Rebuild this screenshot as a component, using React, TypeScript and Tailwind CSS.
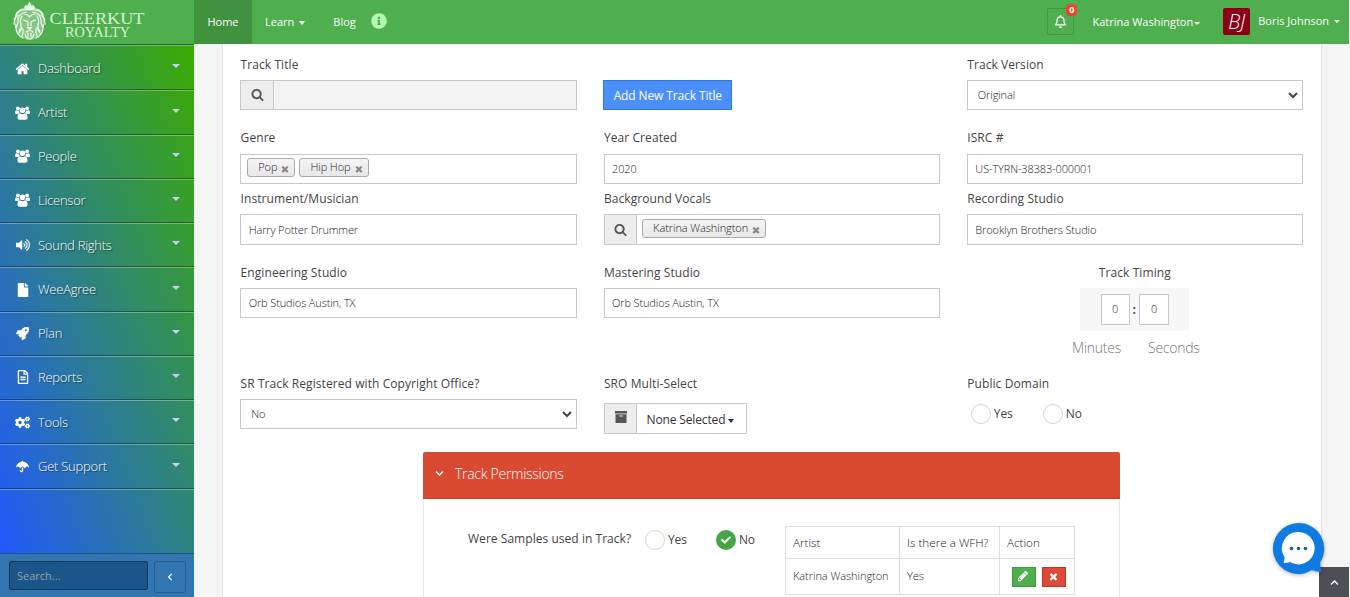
import type { ReactNode } from "react";
import { FaRegBell, FaFile, FaRocket, FaCogs, FaUmbrella, FaRegFileAlt, FaVolumeUp, FaInfoCircle, FaCheck, FaChevronDown, FaChevronUp, FaChevronLeft } from "react-icons/fa";

function Glyph({ d, className }: { d: string; className?: string }) {
  return (
    <svg viewBox="0 0 1792 1792" fill="currentColor" className={className}>
      <path d={d} />
    </svg>
  );
}

const HOME =
  "M1472 992v480q0 26-19 45t-45 19h-384v-384h-256v384h-384q-26 0-45-19t-19-45v-480q0-1 .5-3t.5-3l575-474 575 474q1 2 1 6zm223-69l-62 74q-8 9-21 11h-3q-13 0-21-7l-692-577-692 577q-12 8-24 7-13-2-21-11l-62-74q-8-10-7-23.5t11-21.5l719-599q32-26 76-26t76 26l244 204v-195q0-14 9-23t23-9h192q14 0 23 9t9 23v408l219 182q10 8 11 21.5t-7 23.5z";
const SEARCH =
  "M1216 832q0-185-131.5-316.5t-316.5-131.5-316.5 131.5-131.5 316.5 131.5 316.5 316.5 131.5 316.5-131.5 131.5-316.5zm512 832q0 52-38 90t-90 38q-54 0-90-38l-343-342q-179 124-399 124-143 0-273.5-55.5t-225-150-150-225-55.5-273.5 55.5-273.5 150-225 225-150 273.5-55.5 273.5 55.5 225 150 150 225 55.5 273.5q0 220-124 399l343 343q37 37 37 90z";
const TIMES =
  "M1490 1322q0 40-28 68l-136 136q-28 28-68 28t-68-28l-294-294-294 294q-28 28-68 28t-68-28l-136-136q-28-28-28-68t28-68l294-294-294-294q-28-28-28-68t28-68l136-136q28-28 68-28t68 28l294 294 294-294q28-28 68-28t68 28l136 136q28 28 28 68t-28 68l-294 294 294 294q28 28 28 68z";
const PENCIL =
  "M491 1536l91-91-235-235-91 91v107h128v128h107zm523-928q0-22-22-22-10 0-17 7l-542 542q-7 7-7 17 0 22 22 22 10 0 17-7l542-542q7-7 7-17zm-54-192l416 416-832 832h-416v-416zm683 96q0 53-37 90l-166 166-416-416 166-165q36-38 90-38 53 0 91 38l235 234q37 39 37 91z";

function Users({ className }: { className?: string }) {
  return (
    <svg viewBox="0 0 15 14" fill="currentColor" className={className}>
      <circle cx="2.9" cy="2.3" r="1.9" />
      <circle cx="12.1" cy="2.3" r="1.9" />
      <circle cx="7.5" cy="4.2" r="2.8" />
      <path d="M1.600 4.300C.4 4.300 0 5.500 0 7c0 .8.600 1 1.300 1h1.900c.4-.6 1-.9 1.700-1-.7-.8-.9-1.500-.8-2.500-.9.300-1.700.2-2.500-.2z" />
      <path d="M13.400 4.300c1.200 0 1.600 1.200 1.600 2.700 0 .8-.6 1-1.300 1h-1.900c-.4-.6-1-.9-1.700-1 .7-.8.9-1.500.8-2.500.9.300 1.700.2 2.500-.2z" />
      <path d="M5 7.300c1.500 1.200 3.500 1.200 5 0 2 .1 2.500 2 2.500 4.200 0 1.500-.8 2.200-2.100 2.200H4.600c-1.300 0-2.100-.7-2.100-2.200 0-2.200.5-4.100 2.500-4.200z" />
    </svg>
  );
}

function Caret({ className = "" }: { className?: string }) {
  return <span className={`inline-block h-0 w-0 border-x-4 border-t-4 border-x-transparent ${className}`} />;
}

const NAV: { label: string; height: string; nudge: string; icon: ReactNode }[] = [
  { label: "Dashboard", height: "h-[45px]", nudge: "pt-0.5", icon: <Glyph d={HOME} className="size-4" /> },
  { label: "Artist", height: "h-[45px]", nudge: "", icon: <Users className="h-3.5 w-[15px]" /> },
  { label: "People", height: "h-11", nudge: "pb-[1.5px]", icon: <Users className="h-3.5 w-[15px]" /> },
  { label: "Licensor", height: "h-11", nudge: "pb-[1.5px]", icon: <Users className="h-3.5 w-[15px]" /> },
  { label: "Sound Rights", height: "h-11", nudge: "", icon: <FaVolumeUp className="size-3.5" /> },
  { label: "WeeAgree", height: "h-[45px]", nudge: "", icon: <FaFile className="h-3.5 w-3" /> },
  { label: "Plan", height: "h-11", nudge: "pb-[1.5px]", icon: <FaRocket className="size-[13px]" /> },
  { label: "Reports", height: "h-11", nudge: "pb-[1.5px]", icon: <FaRegFileAlt className="h-3.5 w-3" /> },
  { label: "Tools", height: "h-11", nudge: "", icon: <FaCogs className="size-[15px]" /> },
  { label: "Get Support", height: "h-[45px]", nudge: "", icon: <FaUmbrella className="size-[13px]" /> },
];

function Logo() {
  return (
    <svg viewBox="0 0 150 44" className="h-11 w-[150px]" fill="#d9f3d6">
      <path d="M29.500 9c-7 0-13 3-14.500 9-1 4 0 7 1 11 2 6 8 11 13.500 11S41 35 43 29c1-4 2-7 1-11-1.500-6-7.500-9-14.500-9z" fill="#ffffff" fillOpacity="0.3" />
      <g stroke="#f1fbf0" fill="none" strokeWidth="1.200" strokeLinecap="round">
        <path d="M24 8l2-3 1 2 2.500-5L32 7l1-2 2 3-2 2h-7z" fill="#e9f9e7" strokeWidth="0.600" />
        <path d="M25 10c-6 0-10 4-10 9 0 2-1 3-1 5 1 0 2 2 2 4 0 5 3 8 7 10M34 10c6 0 10 4 10 9 0 2 1 3 1 5-1 0-2 2-2 4 0 5-3 8-7 10" />
        <path d="M26 12c-5 1-8 4-8 9 0 4-1 5-2 6M33 12c5 1 8 4 8 9 0 4 1 5 2 6M22 16c-2 3-2 6-1 9s-1 5-2 6M37 16c2 3 2 6 1 9s1 5 2 6" />
        <path d="M16 14c2-3 5-5 8-5M43 14c-2-3-5-5-8-5M14 20c1-2 2-4 4-5M45 20c-1-2-2-4-4-5M19 33c1-2 3-3 3-6M40 33c-1-2-3-3-3-6M22 36c1-2 2-4 1-7M37 36c-1-2-2-4-1-7" />
        <path d="M24 14c2 0 4 1 5.500 3 1.500-2 3.500-3 5.500-3M23.500 20l4 1.500M35.500 20l-4 1.500M28 22v4M31 22v4" />
        <path d="M27.500 27.500h4l-2 2zM26 32c2-2 5-2 7 0M25 34c1 4 3 5 4.500 5s3.500-1 4.500-5M28 33v4M31 33v4" />
      </g>
      <g fontFamily="'Liberation Serif', serif">
        <text x="49.500" y="23.500" fontSize="16.500" textLength="95" lengthAdjust="spacingAndGlyphs">
          CLEERKUT
        </text>
        <text x="65" y="36.500" fontSize="14" textLength="65" lengthAdjust="spacingAndGlyphs">
          ROYALTY
        </text>
      </g>
    </svg>
  );
}

function Header() {
  return (
    <header className="flex h-11 w-[1349px] shrink-0 bg-[#4fae4e] text-[11px] font-medium text-white">
      <div className="w-[194px]">
        <Logo />
      </div>
      <nav className="flex items-center">
        <a className="flex h-11 w-[58px] items-center justify-center bg-[#41923f]">Home</a>
        <a className="ml-[13px] flex items-center gap-[5px]">
          Learn <Caret className="mt-0.5 border-x-[3.5px] border-t-white" />
        </a>
        <a className="ml-7">Blog</a>
        <FaInfoCircle className="mb-[3px] ml-[15px] size-4 text-[#b5ffb1]" />
      </nav>
      <div className="ml-auto flex items-center pr-[9px]">
        <div className="relative -mt-px flex size-[27px] items-center justify-center rounded-xs border border-[#419641]">
          <FaRegBell className="size-[13px]" />
          <span className="absolute -top-[5px] -right-[4px] flex h-3 w-[11px] items-center justify-center rounded-sm bg-[#ed4332] text-[9px] font-bold">0</span>
        </div>
        <div className="ml-[18px] flex items-center gap-px">
          Katrina Washington <Caret className="mt-0.5 border-x-[3px] border-t-[3px] border-t-white" />
        </div>
        <div className="-mt-px ml-[23px] flex size-[27px] items-center justify-center rounded-xs bg-[#8b0014] text-[20px] font-light italic">BJ</div>
        <div className="-mt-0.5 ml-2 flex items-center gap-[5px]">
          Boris Johnson <Caret className="mt-px border-x-[3px] border-t-[3px] border-t-white" />
        </div>
      </div>
    </header>
  );
}

function Sidebar() {
  return (
    <aside className="flex w-[194px] shrink-0 flex-col">
      <div className="flex flex-1 flex-col border-t border-[#245f3a] bg-[linear-gradient(to_top_right,#2159ff,#3cac00)]">
        {NAV.map((n) => (
          <div
            key={n.label}
            className={`flex shrink-0 items-center border-t border-b border-t-white/30 border-b-black/35 pr-3.5 pl-[15px] text-[13px] tracking-[-0.25px] text-white [text-shadow:1px_1px_1px_rgba(0,0,0,0.5)] ${n.height}`}
          >
            <span className={`flex items-center ${n.nudge}`}>
              <span className="flex w-[15px] items-center justify-center">{n.icon}</span>
              <span className="mt-px ml-2 font-[350]">{n.label}</span>
            </span>
            <Caret className="mb-1 ml-auto border-t-[#c9d0f4]" />
          </div>
        ))}
        <div className="border-t border-white/30" />
      </div>
      <div className="flex h-11 shrink-0 border-t border-[#1f5583] bg-[#3276b1] pt-[7px] pl-[9px]">
        <div className="flex h-[29px] w-[139px] items-center rounded-xs border border-[#0e3554] bg-[#1a5689] pt-px pl-[7px] text-[11px] text-[#98a0a8]">Search...</div>
        <div className="ml-[6px] flex h-8 w-8 items-center justify-center rounded-xs border border-[#285e8e] text-white">
          <FaChevronLeft className="size-2" />
        </div>
      </div>
    </aside>
  );
}

function Field({ label, children, gap = "mt-[5px]" }: { label: string; children: ReactNode; gap?: string }) {
  return (
    <div className="flex w-1/3 flex-col pr-[13.6px] pl-[13.2px]">
      <label className="pl-[0.4px] text-[12px] leading-5 font-medium tracking-[0.08px] text-[#444]">{label}</label>
      <div className={gap}>{children}</div>
    </div>
  );
}

const BOX = "flex items-center border border-[#c8c8c8] bg-white text-[11px] font-light tracking-[-0.13px] text-[#222]";

function Input({ value, className = "h-[30px]" }: { value: string; className?: string }) {
  return <div className={`${BOX} pl-[7.5px] ${className}`}>{value}</div>;
}

function Select({ value }: { value: string }) {
  return (
    <div className={`${BOX} h-[30px] justify-between pr-1 pl-2.5`}>
      {value}
      <svg viewBox="0 0 10 7" className="h-[7px] w-2.5">
        <path d="M1 1l4 4 4-4" fill="none" stroke="#444" strokeWidth="2" />
      </svg>
    </div>
  );
}

function Addon({ children }: { children: ReactNode }) {
  return <div className="flex w-[32.6px] shrink-0 items-center justify-center self-stretch border-r border-[#c8c8c8] bg-[#ededed] text-[#555]">{children}</div>;
}

function Chip({ text }: { text: string }) {
  return (
    <span className="flex h-[19px] items-center gap-[3px] rounded-[3px] border border-[#aaa] bg-linear-to-b from-[#f4f4f4] to-[#e8e8e8] pr-1 pl-2.5 text-[11px] tracking-[-0.08px] text-[#222]">
      {text}
      <Glyph d={TIMES} className="mt-0.5 size-[10px] text-[#888]" />
    </span>
  );
}

function Radio({ label, checked = false }: { label: string; checked?: boolean }) {
  return (
    <span className="flex items-center gap-[3px] text-[12px] tracking-[-0.1px] text-[#444]">
      {checked ? (
        <span className="flex size-5 items-center justify-center rounded-full bg-[#46a546] text-white">
          <FaCheck className="size-2.5" />
        </span>
      ) : (
        <span className="size-5 rounded-full border border-[#d5d5cf] bg-white" />
      )}
      <span>{label}</span>
    </span>
  );
}

function Permissions() {
  return (
    <section className="ml-[196px] w-[697px]">
      <div className="flex h-[47px] items-center rounded-t-xs border-b border-[#c74025] bg-[#da4a32] pb-[3px] pl-3 text-[14px] font-[350] tracking-[-0.28px] text-white">
        <FaChevronDown className="mr-[11px] size-[9px]" />
        Track Permissions
      </div>
      <div className="flex h-[98px] border-x border-[#e8e8e8] pt-[27px] pl-[44px]">
        <span className="w-[177px] pt-[3px] text-[12px] leading-5 font-medium tracking-[0.04px] text-[#444]">Were Samples used in Track?</span>
        <div className="flex h-[27px] w-[140px] items-center gap-[29px]">
          <Radio label="Yes" />
          <Radio label="No" checked />
        </div>
        <table className="h-[69px] w-[289px] table-fixed border-collapse text-[11px] font-light text-[#222]">
          <colgroup>
            <col className="w-[114px]" />
            <col className="w-[100px]" />
            <col className="w-[75px]" />
          </colgroup>
          <tbody>
            <tr className="h-8 text-[11.7px]">
              <td className="border border-[#ddd] pl-[7px]">Artist</td>
              <td className="border border-[#ddd] pl-[7px]">Is there a WFH?</td>
              <td className="border border-[#ddd] pl-[7px]">Action</td>
            </tr>
            <tr className="h-9">
              <td className="border border-[#ddd] pb-px pl-[7px] tracking-[-0.05px]">Katrina Washington</td>
              <td className="border border-[#ddd] pb-px pl-[7px]">Yes</td>
              <td className="border border-[#ddd]">
                <div className="flex gap-1.5 pl-3 text-white">
                  <span className="flex h-5 w-6 items-center justify-center border border-[#3f9a3f] bg-[#4fae4e]">
                    <Glyph d={PENCIL} className="mr-0.5 mb-px size-3" />
                  </span>
                  <span className="flex h-5 w-6 items-center justify-center border border-[#b8382a] bg-[#e04b37]">
                    <Glyph d={TIMES} className="mr-0.5 size-[11px]" />
                  </span>
                </div>
              </td>
            </tr>
          </tbody>
        </table>
      </div>
    </section>
  );
}

function Content() {
  return (
    <main className="w-[1100px] overflow-hidden border-x border-[#e8e8e8] bg-white px-1 pt-[11px]">
      <div className="flex h-[73px]">
        <Field label="Track Title">
          <div className="flex h-[30px] border border-[#c8c8c8] bg-[#f3f3f3]">
            <Addon>
              <Glyph d={SEARCH} className="mb-px ml-px size-[13px]" />
            </Addon>
          </div>
        </Field>
        <div className="w-1/3 px-[13px] pt-[25px]">
          <button className="h-[30px] w-[129px] border border-[#3276d8] bg-[#4b8ffb] pt-0.5 text-[12px] tracking-[-0.12px] text-white">Add New Track Title</button>
        </div>
        <Field label="Track Version">
          <Select value="Original" />
        </Field>
      </div>
      <div className="flex h-[61px]">
        <Field label="Genre" gap="mt-1.5">
          <div className={`${BOX} h-[30px] items-start gap-1 pt-[3px] pl-1.5`}>
            <Chip text="Pop" />
            <Chip text="Hip Hop" />
          </div>
        </Field>
        <Field label="Year Created" gap="mt-1.5">
          <Input value="2020" />
        </Field>
        <Field label="ISRC #" gap="mt-1.5">
          <Input value="US-TYRN-38383-000001" />
        </Field>
      </div>
      <div className="flex h-[74px]">
        <Field label="Instrument/Musician">
          <Input value="Harry Potter Drummer" className="h-[31px] pt-px" />
        </Field>
        <Field label="Background Vocals">
          <div className={`${BOX} h-[31px] items-start`}>
            <Addon>
              <Glyph d={SEARCH} className="mb-px size-[13px]" />
            </Addon>
            <div className="pt-1 pl-[5px]">
              <Chip text="Katrina Washington" />
            </div>
          </div>
        </Field>
        <Field label="Recording Studio">
          <Input value="Brooklyn Brothers Studio" className="h-[31px] pt-px" />
        </Field>
      </div>
      <div className="flex h-[111px]">
        <Field label="Engineering Studio">
          <Input value="Orb Studios Austin, TX" className="h-[30px] pt-px" />
        </Field>
        <Field label="Mastering Studio">
          <Input value="Orb Studios Austin, TX" className="h-[30px] pt-px" />
        </Field>
        <div className="flex w-1/3 flex-col items-center pr-3.5 pl-[13px]">
          <div className="text-[12px] leading-5 font-medium tracking-[0.08px] text-[#444]">Track Timing</div>
          <div className="mt-[5px] flex h-[43px] w-[109px] items-center justify-center gap-[3px] bg-[#f7f7f7] text-[12px] font-bold text-[#444]">
            <div className={`${BOX} h-[31px] w-[29px] justify-center`}>0</div>
            :
            <div className={`${BOX} h-[31px] w-[30px] justify-center`}>0</div>
          </div>
          <div className="mt-[7px] ml-0.5 flex gap-[27px] text-[14px] leading-5 font-light tracking-[-0.25px] text-[#777]">
            <span>Minutes</span>
            <span>Seconds</span>
          </div>
        </div>
      </div>
      <div className="flex h-[78px]">
        <Field label="SR Track Registered with Copyright Office?">
          <Select value="No" />
        </Field>
        <Field label="SRO Multi-Select" gap="mt-[9px]">
          <div className="flex h-[31px] w-[143px] items-center border border-[#c8c8c8] text-[12px] tracking-[-0.15px] text-[#333]">
            <Addon>
              <svg viewBox="0 0 12 12" fill="currentColor" className="mb-[3px] ml-px size-3">
                <path d="M0 0h12v2.500H0zM.5 3.200h11V12H.5zM4.300 4.400v1.200h3.400V4.400z" fillRule="evenodd" />
              </svg>
            </Addon>
            <span className="mt-0.5 pl-[9.5px]">None Selected</span>
            <Caret className="mt-1 ml-[3px] border-x-[3.5px] border-t-[#333]" />
          </div>
        </Field>
        <Field label="Public Domain" gap="mt-[10px]">
          <div className="flex gap-[30px] pl-1">
            <Radio label="Yes" />
            <Radio label="No" />
          </div>
        </Field>
      </div>
      <Permissions />
    </main>
  );
}

export default function App() {
  return (
    <div className="relative flex h-[597px] w-[1350px] flex-col overflow-hidden bg-[#f5f5f5] font-['Open_Sans',sans-serif]">
      <Header />
      <div className="flex min-h-0 flex-1">
        <Sidebar />
        <div className="flex pl-7">
          <Content />
        </div>
      </div>
      <div className="absolute right-px bottom-0 flex h-[30px] w-[30px] items-center justify-center bg-[#4e4f54] text-white">
        <FaChevronUp className="size-[9px]" />
      </div>
      <svg viewBox="0 0 60 60" className="absolute top-[519px] left-[1269px] size-[60px] drop-shadow-[0_1px_2px_rgba(0,0,0,0.3)]">
        <path d="M29.500 4a25.500 25.500 0 1 0 13.500 47.100q4 2 9.500 1.400-1.500-4-1.100-9.500A25.500 25.500 0 0 0 29.500 4z" fill="#0f7ae0" />
        <path d="M29.500 13a16.200 16.200 0 1 1-8.500 30q-3 1.200-6.500 1 1.300-3 1-6A16.200 16.200 0 0 1 29.500 13z" fill="#fff" />
        <g fill="#17609f">
          <circle cx="22.500" cy="29.500" r="1.800" />
          <circle cx="29.500" cy="29.500" r="1.800" />
          <circle cx="36.500" cy="29.500" r="1.800" />
        </g>
      </svg>
    </div>
  );
}
